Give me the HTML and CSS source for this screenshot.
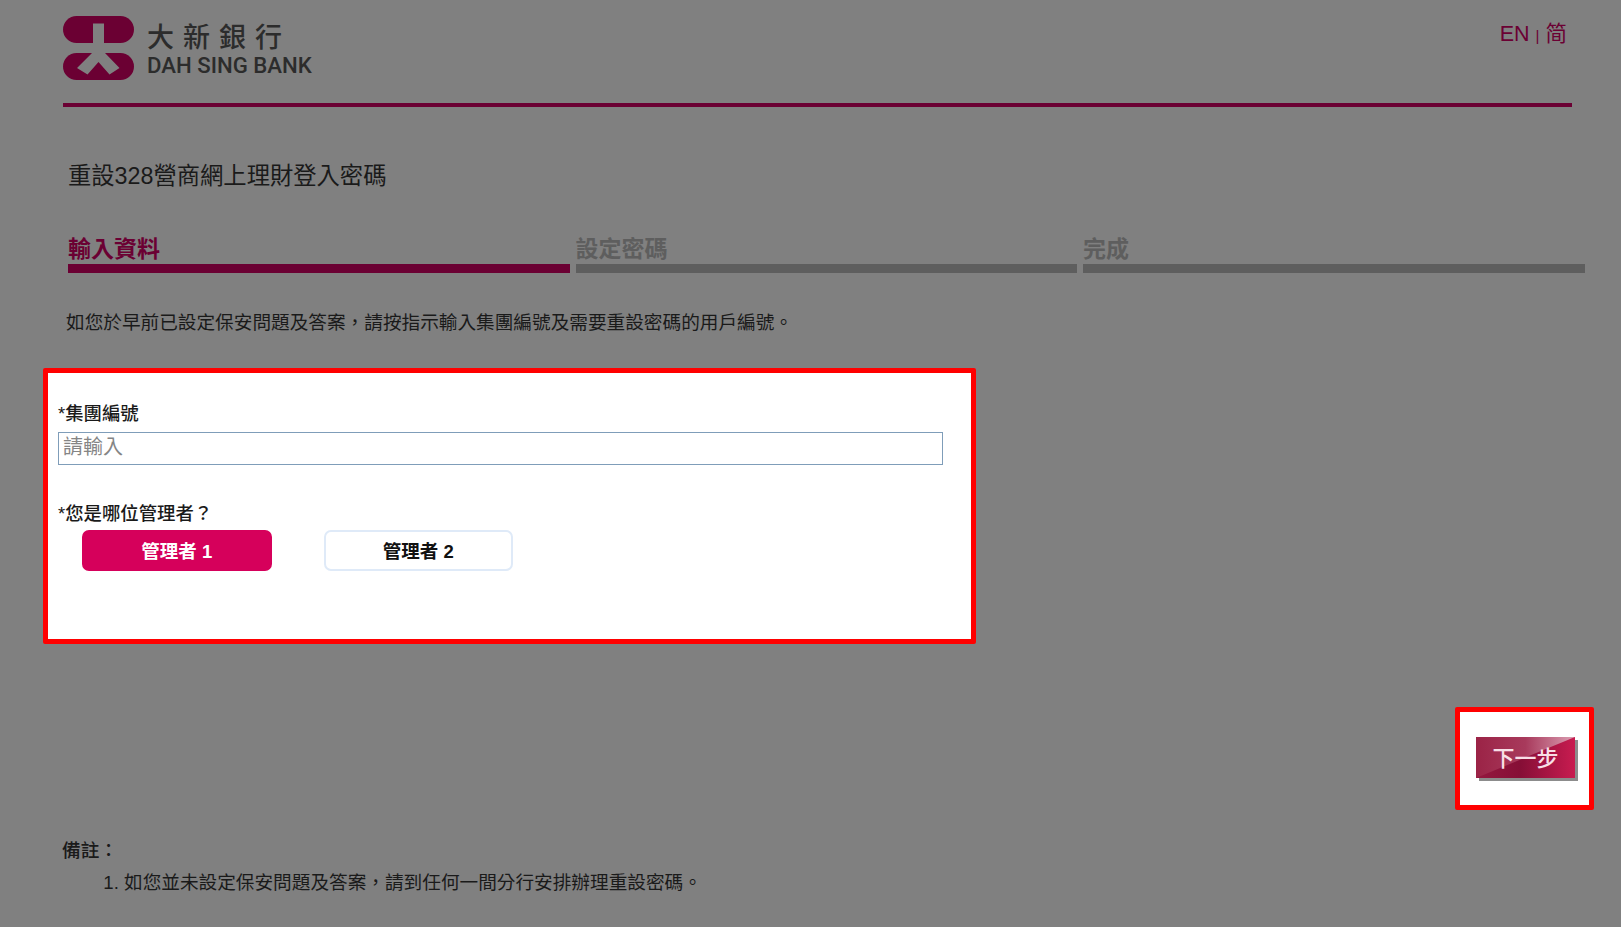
FILE: index.html
```html
<!DOCTYPE html>
<html lang="zh-Hant">
<head>
  <meta charset="UTF-8" />
  <meta name="viewport" content="width=device-width, initial-scale=1" />
  <title>重設328營商網上理財登入密碼</title>
  <link rel="stylesheet" href="styles.css">
</head>
<body>
  <header class="site-header">
    <div class="logo">
      <svg class="logo-mark" viewBox="0 0 71 64" width="71" height="64" aria-hidden="true">
        <rect x="0" y="0" width="71" height="27" rx="13.5" fill="#6b0033"/>
        <rect x="0" y="37" width="71" height="27" rx="13.5" fill="#6b0033"/>
        <path d="M30 7.5H41V30L42 37L56.5 52L46.5 58.5L35.5 46L24.5 58.5L14 52L29 37L30 30Z" fill="#808080"/>
      </svg>
      <div class="logo-text">
        <div class="logo-zh">大新銀行</div>
        <div class="logo-en">DAH SING BANK</div>
      </div>
    </div>
    <div class="lang"><span>EN</span> <span class="lang-sep">|</span> <span>简</span></div>
  </header>

  <h1 class="page-title">重設328營商網上理財登入密碼</h1>

  <div class="steps">
    <div class="step active"><span>輸入資料</span><div class="step-bar"></div></div>
    <div class="step"><span>設定密碼</span><div class="step-bar"></div></div>
    <div class="step"><span>完成</span><div class="step-bar"></div></div>
  </div>

  <p class="intro">如您於早前已設定保安問題及答案，請按指示輸入集團編號及需要重設密碼的用戶編號。</p>

  <section class="form-box">
    <label class="field-label" for="groupNo">*集團編號</label>
    <input class="text-input" id="groupNo" type="text" placeholder="請輸入" />
    <div class="field-label second">*您是哪位管理者？</div>
    <div class="admin-choice">
      <button class="admin-btn selected" type="button">管理者 1</button>
      <button class="admin-btn" type="button">管理者 2</button>
    </div>
  </section>

  <div class="next-row">
    <div class="next-box">
      <button class="next-btn" type="button"><span>下一步</span></button>
    </div>
  </div>

  <section class="notes">
    <div class="notes-title">備註：</div>
    <ol>
      <li>如您並未設定保安問題及答案，請到任何一間分行安排辦理重設密碼。</li>
    </ol>
  </section>
</body>
</html>
```

FILE: styles.css
```css
html, body {
  margin: 0;
  padding: 0;
}
body {
  background: #808080;
  color: #1a1a1a;
  font-family: "Liberation Sans", "Noto Sans CJK TC", sans-serif;
  font-size: 18.65px;
}
.site-header {
  display: flex;
  justify-content: space-between;
  align-items: flex-start;
  margin: 0 49px 0 63px;
  padding-top: 16px;
  height: 87px;
  border-bottom: 4px solid #6b0033;
}
.logo {
  display: flex;
  gap: 13px;
}
.logo-text {
  color: #2c2c2c;
}
.logo-zh {
  padding-top: 3px;
  font-size: 27px;
  font-weight: 500;
  line-height: 38px;
  letter-spacing: 9px;
}
.logo-en {
  font-family: Roboto, "Liberation Sans", sans-serif;
  font-size: 22.2px;
  font-weight: 500;
  line-height: 16px;
}
.lang {
  color: #6b0033;
  font-size: 21.5px;
  line-height: 36px;
  padding-right: 5px;
}
.lang-sep {
  font-size: 15px;
}
.page-title {
  margin: 51px 0 0 68px;
  font-size: 23.3px;
  font-weight: normal;
  line-height: 36px;
}
.steps {
  display: grid;
  grid-template-columns: repeat(3, 501.5px);
  gap: 6px;
  margin: 40px 0 0 68px;
}
.step {
  color: #5e5e5e;
  font-size: 23px;
  font-weight: bold;
  line-height: 30px;
}
.step-bar {
  height: 9px;
  background: #5e5e5e;
}
.step.active {
  color: #6b0033;
}
.step.active .step-bar {
  background: #6b0033;
}
.intro {
  margin: 36px 0 0 66px;
  line-height: 28px;
}
.form-box {
  box-sizing: border-box;
  width: 933px;
  height: 276px;
  margin: 31px 0 0 43px;
  padding: 27px 10px 0;
  background: #fff;
  border: 5px solid #f00;
  border-radius: 2px;
}
.field-label {
  display: block;
  font-size: 18.4px;
  font-weight: 500;
  line-height: 28px;
}
.field-label.second {
  margin-top: 35px;
}
.text-input {
  display: block;
  box-sizing: border-box;
  width: 885px;
  height: 33px;
  margin-top: 4px;
  padding: 0 4px 2px;
  border: 1px solid #7f9db9;
  border-radius: 0;
  outline: none;
  font-family: inherit;
  font-size: 20px;
}
.text-input::placeholder {
  color: #858585;
}
.admin-choice {
  display: flex;
  gap: 52px;
  margin: 2px 0 0 24px;
}
.admin-btn {
  width: 189.5px;
  height: 41px;
  padding: 0 0 1px;
  background: #fff;
  border: 2px solid #dfeaf8;
  border-radius: 7px;
  color: #111;
  font-family: inherit;
  font-size: 18.5px;
  font-weight: bold;
  cursor: pointer;
}
.admin-btn.selected {
  background: #d6005b;
  border-color: #d6005b;
  color: #fff;
}
.next-row {
  display: flex;
  justify-content: flex-end;
  margin: 63px 27px 0 0;
}
.next-box {
  box-sizing: border-box;
  width: 139px;
  height: 103px;
  padding: 25px 0 0 16px;
  background: #fff;
  border: 5px solid #f00;
  border-radius: 2px;
}
.next-btn {
  position: relative;
  display: block;
  width: 99px;
  height: 41px;
  padding: 0 0 4px;
  border: 0;
  background: linear-gradient(90deg, #94183f 0%, #860e36 45%, #c81c50 100%);
  box-shadow: 3px 3px 0 #8c8c8c;
  color: #f7dfe6;
  font-family: inherit;
  font-size: 22px;
  font-weight: 500;
  cursor: pointer;
}
.next-btn::before {
  content: "";
  position: absolute;
  inset: 0;
  background: linear-gradient(90deg, #9b2346 0%, #a83a5c 50%, #dca0b4 100%);
  clip-path: polygon(0 0, 100% 0, 0 100%);
}
.next-btn span {
  position: relative;
}
.notes {
  margin: 25px 0 0 62px;
}
.notes-title {
  font-weight: 500;
  line-height: 32px;
}
.notes ol {
  margin: 0;
  padding-left: 62px;
}
.notes li {
  line-height: 32px;
}
```
